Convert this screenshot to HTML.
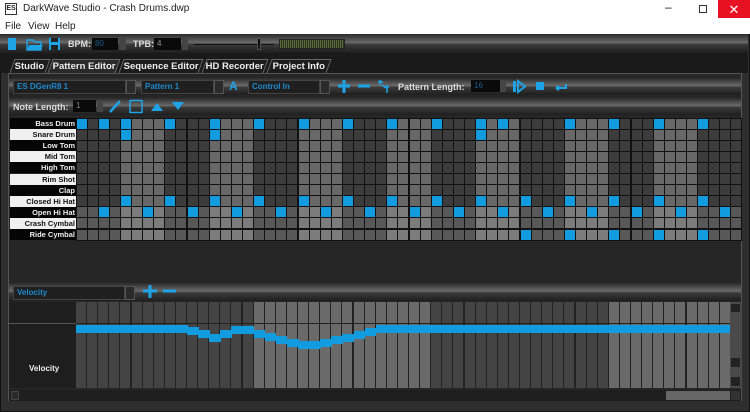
<!DOCTYPE html>
<html><head><meta charset="utf-8"><style>
*{margin:0;padding:0;box-sizing:border-box}
body{width:750px;height:412px;overflow:hidden;background:#2b2b2b;font-family:"Liberation Sans",sans-serif;position:relative}
.abs{position:absolute}
.title{left:0;top:0;width:750px;height:18px;background:#fff;font-size:10px;color:#222}
.menu{left:0;top:18px;width:750px;height:16px;background:#fff;font-size:10px;color:#222}
.bar{background:linear-gradient(#2a2a2a,#6a6a6a 45%,#3a3a3a 55%,#1e1e1e)}
.lbl{font-weight:bold;color:#ddd;font-size:9px}
.inp{background:#0a0a0a;color:#1a5a8a;font-size:8px;padding-left:3px;line-height:12px;height:12px}
.dd{background:#1f1f1f;border:1px solid #444;color:#1e8ad0;font-size:8px;font-weight:bold;padding-left:3px;line-height:12px;height:14px}
.ddb{background:#2a2a2a;border:1px solid #555;width:10px;height:14px}
.tab{top:59px;height:14px;font-size:9.5px;font-weight:bold;color:#eee;line-height:14px;text-align:center;background:#1c1c1c;border:1px solid #666;border-bottom:none;transform:skewX(-20deg)}
.tab span{display:inline-block;transform:skewX(20deg)}
.rl{left:10px;width:66px;height:11.1px;font-size:7.5px;font-weight:bold;text-align:right;line-height:11px;padding-right:1px}
</style></head><body>
<div class="abs title"><div class="abs" style="left:5px;top:3px;width:12px;height:12px;border:1px solid #333;font-size:7px;font-weight:bold;text-align:center;line-height:10px">ES</div><span class="abs" style="left:23px;top:3px">DarkWave Studio - Crash Drums.dwp</span>
<span class="abs" style="left:665px;top:0px;font-size:12px">&#8211;</span><div class="abs" style="left:699px;top:5px;width:8px;height:8px;border:1px solid #333"></div><div class="abs" style="left:718px;top:0;width:32px;height:20px;background:#e81123;color:#fff;text-align:center;font-size:13px;line-height:19px">✕</div></div>
<div class="abs menu"><span class="abs" style="left:5px;top:3px">File</span><span class="abs" style="left:28px;top:3px">View</span><span class="abs" style="left:55px;top:3px">Help</span></div>
<div class="abs" style="left:0;top:34px;width:750px;height:378px;background:#2e2e2e;border:1px solid #111"></div>
<div class="abs bar" style="left:0;top:34px;width:748px;height:19px"></div>
<div class="abs" style="left:8px;top:38px;width:8px;height:12px;background:#1ea3e6"></div>
<svg class="abs" style="left:26px;top:37px" width="18" height="14"><path d="M1 3h6l2 2h6v8H1z" fill="none" stroke="#1ea3e6" stroke-width="1.5"/><path d="M3 8h14l-3 5H1z" fill="#1ea3e6"/></svg>
<svg class="abs" style="left:48px;top:37px" width="13" height="14"><rect x="1" y="1" width="11" height="12" fill="#1ea3e6"/><rect x="3" y="1" width="7" height="4" fill="#222"/><rect x="3" y="8" width="7" height="5" fill="#222"/></svg>
<span class="abs lbl" style="left:68px;top:39px">BPM:</span><div class="abs inp" style="left:92px;top:38px;width:26px">80</div><div class="abs" style="left:119px;top:38px;width:7px;height:12px;background:#444"></div>
<span class="abs lbl" style="left:133px;top:39px">TPB:</span><div class="abs inp" style="left:154px;top:38px;width:27px;color:#999">4</div><div class="abs" style="left:182px;top:38px;width:6px;height:12px;background:#444"></div>
<div class="abs" style="left:194px;top:44px;width:80px;height:1px;background:#111"></div><div class="abs" style="left:257px;top:38px;width:4px;height:12px;background:#111;border:1px solid #555"></div>
<div class="abs" style="left:279px;top:39px;width:66px;height:10px;background:repeating-linear-gradient(90deg,#5a6a3a 0 1px,#2a3320 1px 2px);border:1px solid #222"></div>
<div class="abs" style="left:0;top:53px;width:748px;height:20px;background:#1a1a1a"></div>
<div class="abs tab" style="left:12px;width:36px"><span>Studio</span></div>
<div class="abs tab" style="left:50px;width:68px;background:#2a2a2a"><span>Pattern Editor</span></div>
<div class="abs tab" style="left:121px;width:80px"><span>Sequence Editor</span></div>
<div class="abs tab" style="left:204px;width:62px"><span>HD Recorder</span></div>
<div class="abs tab" style="left:269px;width:60px"><span>Project Info</span></div>
<div class="abs" style="left:8px;top:73px;width:734px;height:328px;background:#262626;border:1px solid #555"></div>
<div class="abs bar" style="left:9px;top:78px;width:732px;height:17px"></div>
<div class="abs dd" style="left:13px;top:80px;width:113px">ES DGenR8 1</div><div class="abs ddb" style="left:126px;top:80px"></div>
<div class="abs dd" style="left:141px;top:80px;width:73px">Pattern 1</div><div class="abs ddb" style="left:214px;top:80px"></div>
<span class="abs" style="left:229px;top:79px;color:#1ea3e6;font-weight:bold;font-size:12px">A</span>
<div class="abs dd" style="left:248px;top:80px;width:72px">Control In</div><div class="abs ddb" style="left:320px;top:80px"></div>
<svg class="abs" style="left:336px;top:79px" width="60" height="15"><path d="M2 7h12M8 1v13" stroke="#1ea3e6" stroke-width="3"/><path d="M22 7h12" stroke="#1ea3e6" stroke-width="3"/><path d="M42 3h5M44 1v5M48 8h5M51 6v8M46 6l4 3" stroke="#1ea3e6" stroke-width="1.5" fill="none"/></svg>
<span class="abs lbl" style="left:398px;top:82px">Pattern Length:</span><div class="abs inp" style="left:471px;top:80px;width:29px">16</div><div class="abs" style="left:500px;top:80px;width:6px;height:12px;background:#444"></div>
<svg class="abs" style="left:512px;top:79px" width="90" height="15"><rect x="1" y="2" width="3" height="11" fill="#1ea3e6"/><path d="M6 2l7 5.5-7 5.5z" fill="none" stroke="#1ea3e6" stroke-width="2"/><rect x="24" y="3" width="8" height="8" fill="#1ea3e6"/><path d="M44 9h10V5M44 9l3-2M44 9l3 2" stroke="#1ea3e6" stroke-width="2" fill="none"/></svg>
<div class="abs bar" style="left:9px;top:98px;width:732px;height:17px"></div>
<span class="abs lbl" style="left:13px;top:102px">Note Length:</span><div class="abs inp" style="left:73px;top:100px;width:23px;color:#888">1</div><div class="abs" style="left:97px;top:100px;width:6px;height:12px;background:#444"></div>
<svg class="abs" style="left:108px;top:99px" width="80" height="15"><path d="M2 13L12 2" stroke="#1ea3e6" stroke-width="2.5"/><rect x="22" y="1.5" width="12" height="12" fill="none" stroke="#1ea3e6" stroke-width="1.5"/><path d="M43 12l6-8 6 8z" fill="#1ea3e6"/><path d="M64 3h12l-6 8z" fill="#1ea3e6"/></svg>
<div id="rows"></div>
<div id="grid" class="abs" style="left:76px;top:118px;width:666px;height:123px;background:#111"></div>
<div class="abs" style="left:9px;top:241px;width:732px;height:38px;background:#262626"></div>
<div class="abs bar" style="left:9px;top:283px;width:732px;height:18px"></div>
<div class="abs dd" style="left:13px;top:286px;width:112px">Velocity</div><div class="abs ddb" style="left:125px;top:286px"></div>
<svg class="abs" style="left:141px;top:284px" width="40" height="15"><path d="M2 7h14M9 1v13" stroke="#1ea3e6" stroke-width="3"/><path d="M22 7h13" stroke="#1ea3e6" stroke-width="3"/></svg>
<div class="abs" style="left:9px;top:302px;width:67px;height:86px;background:#1e1e1e"></div>
<div class="abs" style="left:9px;top:323px;width:67px;height:1px;background:#555"></div>
<span class="abs" style="left:29px;top:364px;color:#eee;font-weight:bold;font-size:8px">Velocity</span>
<div id="vel" class="abs" style="left:76px;top:302px;width:654px;height:86px;background:#222;overflow:hidden"></div>
<div class="abs" style="left:730px;top:302px;width:12px;height:86px;background:#4a4a4a"></div>
<div class="abs" style="left:731px;top:304px;width:9px;height:8px;background:#222"></div>
<div class="abs" style="left:731px;top:358px;width:9px;height:9px;background:#222"></div>
<div class="abs" style="left:731px;top:377px;width:9px;height:9px;background:#222"></div>
<div class="abs" style="left:9px;top:390px;width:732px;height:11px;background:#1e1e1e"></div>
<div class="abs" style="left:666px;top:391px;width:64px;height:9px;background:#666"></div>
<div class="abs" style="left:11px;top:391px;width:8px;height:9px;background:#2a2a2a;border:1px solid #444"></div>
<div class="abs" style="left:731px;top:391px;width:9px;height:9px;background:#333"></div>
<script>
var names=["Bass Drum","Snare Drum","Low Tom","Mid Tom","High Tom","Rim Shot","Clap","Closed Hi Hat","Open Hi Hat","Crash Cymbal","Ride Cymbal"];
var h="";for(var i=0;i<11;i++){var w=i%2==1;h+='<div class="abs rl" style="top:'+(118+i*11.1)+'px;background:'+(w?'#f0f0f0':'#050505')+';color:'+(w?'#111':'#eee')+'">'+names[i]+'</div>';}
document.getElementById("rows").innerHTML=h;
var notes=[[0,2,4,8,12,16,20,24,28,32,36,38,44,48,52,56],[4,12,36],[],[],[],[],[],[],[],[],[40,44,48,52,56]];
for(var c=4;c<=56;c+=4)notes[7].push(c);for(c=2;c<60;c+=4)notes[8].push(c);
var g="";var cw=11.1;
for(var r=0;r<11;r++)for(c=0;c<60;c++){var dark=Math.floor(c/4)%2==0;var lower=r>=8;var col=dark?(lower?'#585858':'#3c3c3c'):(lower?'#7c7c7c':'#686868');
if(notes[r].indexOf(c)>=0)col='#139be0';
g+='<div class="abs" style="left:'+(c*cw+0.5)+'px;top:'+(r*11.1+0.5)+'px;width:'+(cw-1)+'px;height:10.1px;background:'+col+'"></div>';}
document.getElementById("grid").innerHTML=g;
var v="";var ys={10:327,11:330,12:334,13:330,14:326,15:326,16:330,17:333,18:336,19:339,20:341,21:341,22:339,23:336,24:334,25:331,26:328};
for(c=0;c<59;c++){var lt=Math.floor(c/16)%2==1;v+='<div class="abs" style="left:'+(c*cw)+'px;top:0;width:'+(cw-1)+'px;height:86px;background:'+(lt?'#6a6a6a':'#444')+'"></div>';}
for(c=0;c<59;c++){var y=(ys[c]||325)-302;v+='<div class="abs" style="left:'+(c*cw)+'px;top:'+y+'px;width:'+(cw+0.6)+'px;height:8px;background:#139be0"></div>';}
v+='<div class="abs" style="left:0;top:21px;width:654px;height:1px;background:#222"></div>';
document.getElementById("vel").innerHTML=v;
</script>
</body></html>
